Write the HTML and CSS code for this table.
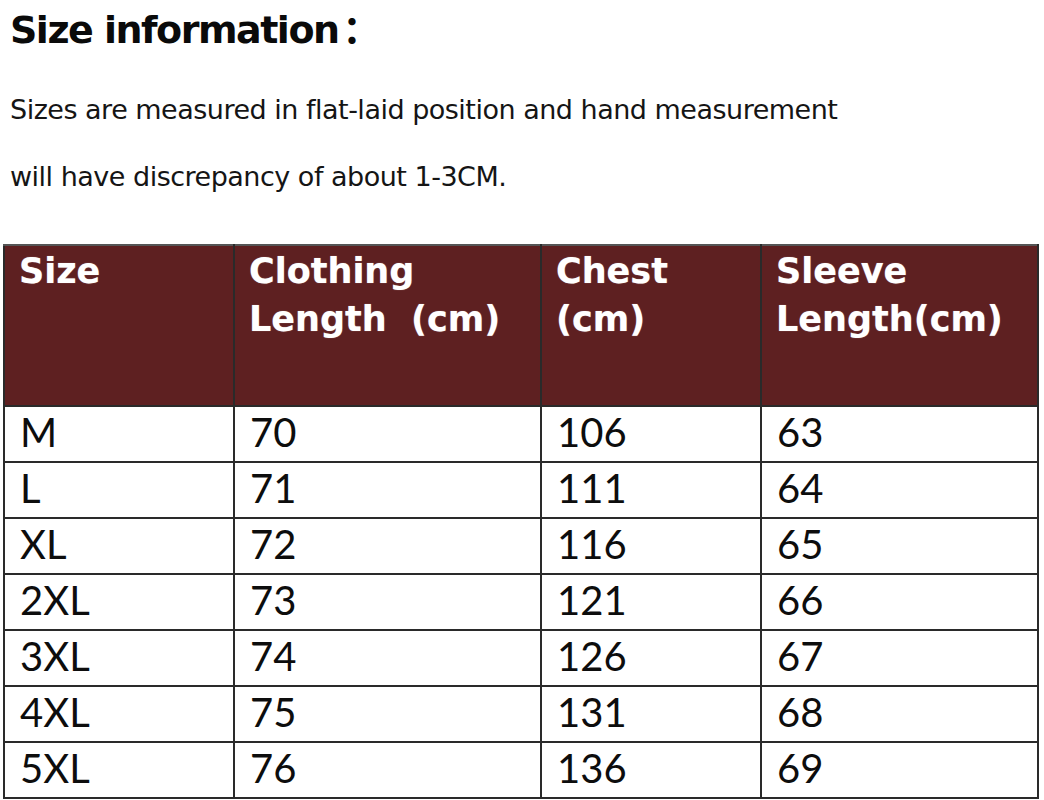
FILE: index.html
```html
<!DOCTYPE html>
<html lang="en">
<head>
<meta charset="utf-8">
<title>Size information</title>
<link rel="stylesheet" href="styles.css">
</head>
<body>
<h1 class="title">Size information<span class="colon">：</span></h1>
<p class="note">Sizes are measured in flat-laid position and hand measurement<br>will have discrepancy of about 1-3CM.</p>
<table class="sizes">
  <colgroup>
    <col class="c1"><col class="c2"><col class="c3"><col class="c4">
  </colgroup>
  <thead>
    <tr>
      <th>Size</th>
      <th>Clothing<br>Length&nbsp;&nbsp;(cm)</th>
      <th>Chest<br>(cm)</th>
      <th>Sleeve<br>Length(cm)</th>
    </tr>
  </thead>
  <tbody>
    <tr><td>M</td><td>70</td><td>106</td><td>63</td></tr>
    <tr><td>L</td><td>71</td><td>111</td><td>64</td></tr>
    <tr><td>XL</td><td>72</td><td>116</td><td>65</td></tr>
    <tr><td>2XL</td><td>73</td><td>121</td><td>66</td></tr>
    <tr><td>3XL</td><td>74</td><td>126</td><td>67</td></tr>
    <tr><td>4XL</td><td>75</td><td>131</td><td>68</td></tr>
    <tr><td>5XL</td><td>76</td><td>136</td><td>69</td></tr>
  </tbody>
</table>
</body>
</html>
```

FILE: styles.css
```css
html, body {
  margin: 0;
  padding: 0;
  background: #ffffff;
}
body {
  color: #111111;
  font-family: "DejaVu Sans", Verdana, sans-serif;
}
.title {
  margin: 0;
  padding: 5px 0 0 10px;
  font-size: 38px;
  line-height: 50px;
  font-weight: bold;
  letter-spacing: -1.5px;
  color: #0a0a0a;
}
.colon {
  font-family: "DejaVu Sans", "Noto Sans CJK SC", sans-serif;
  letter-spacing: 0;
  margin-left: 4px;
}
.note {
  margin: 21px 0 0 0;
  padding-left: 10px;
  font-size: 27px;
  line-height: 67px;
  letter-spacing: -0.5px;
  color: #151515;
}
.sizes {
  margin: 34px 0 0 3px;
  border-collapse: collapse;
  table-layout: fixed;
  width: 1034px;
}
.c1 { width: 230px; }
.c2 { width: 307px; }
.c3 { width: 220px; }
.c4 { width: 277px; }
.sizes th,
.sizes td {
  border: 2px solid #2a2a2a;
  text-align: left;
  vertical-align: top;
  box-sizing: border-box;
}
.sizes th {
  background: #5e2021;
  color: #ffffff;
  font-family: "DejaVu Sans", Verdana, sans-serif;
  font-weight: bold;
  font-size: 35px;
  line-height: 48px;
  height: 161px;
  padding: 1px 10px 0 14px;
  text-shadow: 0 0 1px rgba(255,255,255,0.5);
}
.sizes thead tr th {
  border-top-color: #555555;
}
.sizes td {
  font-family: Lato, "Open Sans", sans-serif;
  font-size: 40px;
  line-height: 48px;
  height: 56px;
  padding: 1px 12px 0 15px;
  color: #0d0d0d;
}
```
